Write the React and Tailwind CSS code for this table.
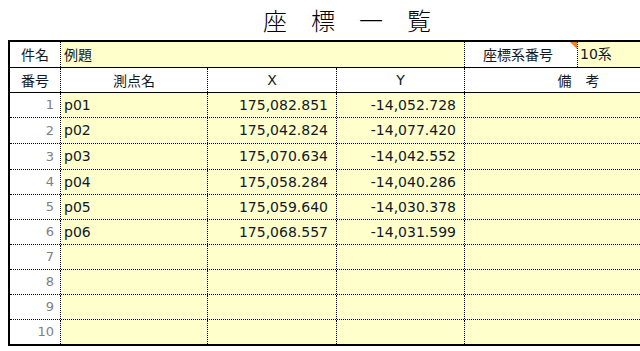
const rows = [
  { no: 1, name: 'p01', x: '175,082.851', y: '-14,052.728', h: 'h-[25px]' },
  { no: 2, name: 'p02', x: '175,042.824', y: '-14,077.420', h: 'h-[26px]' },
  { no: 3, name: 'p03', x: '175,070.634', y: '-14,042.552', h: 'h-[26px]' },
  { no: 4, name: 'p04', x: '175,058.284', y: '-14,040.286', h: 'h-[25px]' },
  { no: 5, name: 'p05', x: '175,059.640', y: '-14,030.378', h: 'h-[25px]' },
  { no: 6, name: 'p06', x: '175,068.557', y: '-14,031.599', h: 'h-[25px]' },
  { no: 7, name: '', x: '', y: '', h: 'h-[25px]' },
  { no: 8, name: '', x: '', y: '', h: 'h-[25px]' },
  { no: 9, name: '', x: '', y: '', h: 'h-[25px]' },
  { no: 10, name: '', x: '', y: '', h: 'h-[24px]' },
]

const font = "font-['DejaVu_Sans','Noto_Sans_CJK_JP',sans-serif]"
const jp = "font-['Noto_Sans_CJK_JP',sans-serif]"

export default function App() {
  return (
    <div className={`w-[640px] h-[351px] overflow-hidden bg-white text-[#101828] ${font}`}>
      {/* タイトル */}
      <div className="w-[686px] ml-2 pr-2 h-[40px] flex items-center justify-center">
        <h1 className={`text-[24px] leading-none font-light text-black ${jp}`}>座　標　一　覧</h1>
      </div>

      <div className="w-[686px] ml-2 border-2 border-black">
        {/* 件名 */}
        <div className="flex h-[26px] border-b border-black">
          <div className={`w-[51px] shrink-0 border-r border-dotted border-black bg-white flex items-center justify-center text-[14px] ${jp}`}>
            件名
          </div>
          <div className={`w-[404px] shrink-0 border-r border-dotted border-black bg-[#ffffcc] flex items-center pl-[3px] text-[14px] ${jp}`}>
            例題
          </div>
          <div className={`relative w-[113px] shrink-0 border-r border-dotted border-black bg-white flex items-center justify-center pr-[6px] text-[14px] ${jp}`}>
            座標系番号
            <span className="absolute top-0 right-0 w-0 h-0 border-l-[7px] border-l-transparent border-t-[7px] border-t-[#f5821f]" />
          </div>
          <div className="flex-1 bg-[#ffffcc] flex items-center pl-[2px] text-[14px]">10系</div>
        </div>

        {/* 見出し */}
        <div className="flex h-[25px] border-b border-black bg-white text-[14px]">
          <div className={`w-[51px] shrink-0 border-r border-dotted border-black flex items-center justify-center ${jp}`}>
            番号
          </div>
          <div className={`w-[147px] shrink-0 border-r border-dotted border-black flex items-center justify-center ${jp}`}>
            測点名
          </div>
          <div className="w-[129px] shrink-0 border-r border-dotted border-black flex items-center justify-center">X</div>
          <div className="w-[128px] shrink-0 border-r border-dotted border-black flex items-center justify-center">Y</div>
          <div className={`flex-1 flex items-center justify-center ${jp}`}>備　考</div>
        </div>

        {/* データ行 */}
        {rows.map((r, i) => (
          <div
            key={r.no}
            className={`flex ${r.h} text-[14px] ${i < rows.length - 1 ? 'border-b border-dotted border-black' : ''}`}
          >
            <div className="w-[51px] shrink-0 border-r border-dotted border-black bg-white flex items-center justify-end pr-[6px] text-[13px] text-[#808080]">
              {r.no}
            </div>
            <div className="w-[147px] shrink-0 border-r border-dotted border-black bg-[#ffffcc] flex items-center pl-[3px]">
              {r.name}
            </div>
            <div className="w-[129px] shrink-0 border-r border-dotted border-black bg-[#ffffcc] flex items-center justify-end pr-[8px]">
              {r.x}
            </div>
            <div className="w-[128px] shrink-0 border-r border-dotted border-black bg-[#ffffcc] flex items-center justify-end pr-[8px]">
              {r.y}
            </div>
            <div className="flex-1 bg-[#ffffcc]" />
          </div>
        ))}
      </div>
    </div>
  )
}
